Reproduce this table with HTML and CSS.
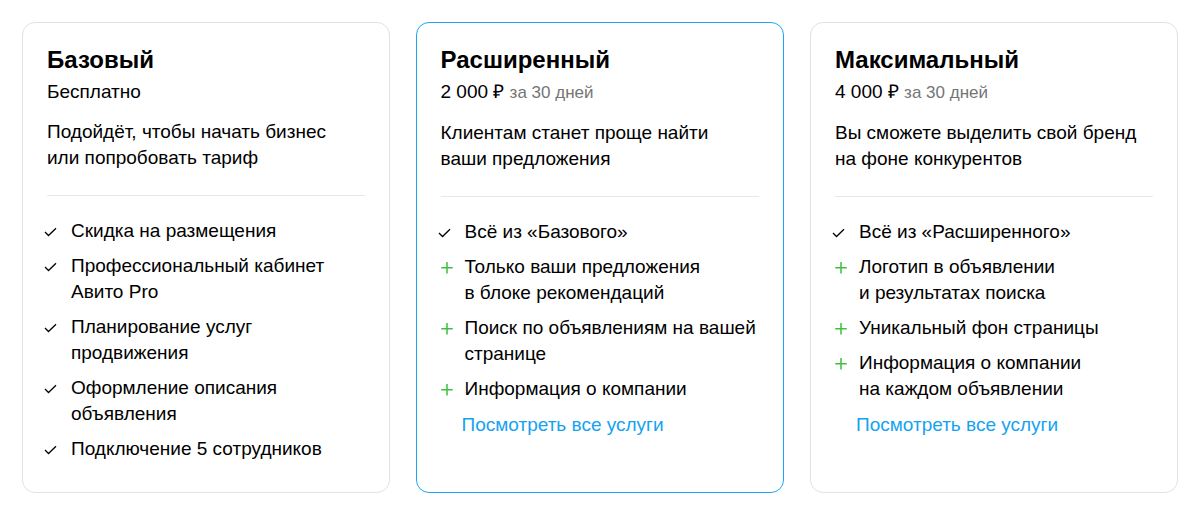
FILE: index.html
```html
<!DOCTYPE html>
<html lang="ru">
<head>
<meta charset="utf-8">
<link rel="stylesheet" href="styles.css">
</head>
<body>
<div class="plans">
  <div class="card">
    <h2 class="title">Базовый</h2>
    <div class="price">Бесплатно</div>
    <p class="desc">Подойдёт, чтобы начать бизнес<br>или попробовать тариф</p>
    <hr class="divider">
    <ul class="features">
      <li><svg class="ic" viewBox="0 0 16 16"><path d="M2 8 L5.5 11.5 L13 4.2" fill="none" stroke="#000" stroke-width="1.3"/></svg><span>Скидка на размещения</span></li>
      <li><svg class="ic" viewBox="0 0 16 16"><path d="M2 8 L5.5 11.5 L13 4.2" fill="none" stroke="#000" stroke-width="1.3"/></svg><span>Профессиональный кабинет<br>Авито Pro</span></li>
      <li><svg class="ic" viewBox="0 0 16 16"><path d="M2 8 L5.5 11.5 L13 4.2" fill="none" stroke="#000" stroke-width="1.3"/></svg><span>Планирование услуг<br>продвижения</span></li>
      <li><svg class="ic" viewBox="0 0 16 16"><path d="M2 8 L5.5 11.5 L13 4.2" fill="none" stroke="#000" stroke-width="1.3"/></svg><span>Оформление описания<br>объявления</span></li>
      <li><svg class="ic" viewBox="0 0 16 16"><path d="M2 8 L5.5 11.5 L13 4.2" fill="none" stroke="#000" stroke-width="1.3"/></svg><span>Подключение 5 сотрудников</span></li>
    </ul>
  </div>
  <div class="card card-active">
    <h2 class="title">Расширенный</h2>
    <div class="price">2 000 ₽ <span class="period">за 30 дней</span></div>
    <p class="desc">Клиентам станет проще найти<br>ваши предложения</p>
    <hr class="divider">
    <ul class="features">
      <li><svg class="ic" viewBox="0 0 16 16"><path d="M2 8 L5.5 11.5 L13 4.2" fill="none" stroke="#000" stroke-width="1.3"/></svg><span>Всё из «Базового»</span></li>
      <li><svg class="ic" viewBox="0 0 16 16"><path d="M10 2 V13.5 M4.25 7.75 H15.75" fill="none" stroke="#3fbf3f" stroke-width="1.5"/></svg><span>Только ваши предложения<br>в блоке рекомендаций</span></li>
      <li><svg class="ic" viewBox="0 0 16 16"><path d="M10 2 V13.5 M4.25 7.75 H15.75" fill="none" stroke="#3fbf3f" stroke-width="1.5"/></svg><span>Поиск по объявлениям на вашей<br>странице</span></li>
      <li><svg class="ic" viewBox="0 0 16 16"><path d="M10 2 V13.5 M4.25 7.75 H15.75" fill="none" stroke="#3fbf3f" stroke-width="1.5"/></svg><span>Информация о компании</span></li>
    </ul>
    <a class="more" href="#">Посмотреть все услуги</a>
  </div>
  <div class="card">
    <h2 class="title">Максимальный</h2>
    <div class="price">4 000 ₽ <span class="period">за 30 дней</span></div>
    <p class="desc">Вы сможете выделить свой бренд<br>на фоне конкурентов</p>
    <hr class="divider">
    <ul class="features">
      <li><svg class="ic" viewBox="0 0 16 16"><path d="M2 8 L5.5 11.5 L13 4.2" fill="none" stroke="#000" stroke-width="1.3"/></svg><span>Всё из «Расширенного»</span></li>
      <li><svg class="ic" viewBox="0 0 16 16"><path d="M10 2 V13.5 M4.25 7.75 H15.75" fill="none" stroke="#3fbf3f" stroke-width="1.5"/></svg><span>Логотип в объявлении<br>и результатах поиска</span></li>
      <li><svg class="ic" viewBox="0 0 16 16"><path d="M10 2 V13.5 M4.25 7.75 H15.75" fill="none" stroke="#3fbf3f" stroke-width="1.5"/></svg><span>Уникальный фон страницы</span></li>
      <li><svg class="ic" viewBox="0 0 16 16"><path d="M10 2 V13.5 M4.25 7.75 H15.75" fill="none" stroke="#3fbf3f" stroke-width="1.5"/></svg><span>Информация о компании<br>на каждом объявлении</span></li>
    </ul>
    <a class="more" href="#">Посмотреть все услуги</a>
  </div>
</div>
</body>
</html>
```
FILE: styles.css
```css
* { box-sizing: border-box; }
html, body { margin: 0; padding: 0; background: #fff; }
body {
  font-family: "Liberation Sans", Arial, sans-serif;
  color: #000;
  width: 1200px;
  height: 515px;
}
.plans {
  display: flex;
  gap: 26px;
  padding: 22px 22px 0;
}
.card {
  flex: 0 0 368px;
  height: 471px;
  border: 1px solid #e2e2e2;
  border-radius: 13px;
  padding: 23px 24px 0 24px;
  display: flex;
  flex-direction: column;
}
.card-active {
  border: 1.5px solid #1aa6f5;
  padding: 22.5px 23.5px 0 23.5px;
}
.title {
  margin: 0;
  font-size: 24px;
  font-weight: 700;
  line-height: 28px;
}
.price {
  margin-top: 6px;
  font-size: 19px;
  line-height: 24px;
}
.period {
  font-size: 17px;
  color: #757575;
}
.desc {
  margin: 15px 0 0;
  font-size: 19px;
  line-height: 26px;
}
.divider {
  margin: 24px 0 0;
  border: 0;
  height: 1px;
  background: #e8e8e8;
  width: 318px;
}
.features {
  list-style: none;
  margin: 22px 0 0;
  padding: 0;
  display: flex;
  flex-direction: column;
  gap: 9px;
}
.features li {
  display: flex;
  align-items: flex-start;
  font-size: 19px;
  line-height: 26px;
}
.ic {
  flex: 0 0 16px;
  width: 16px;
  height: 16px;
  margin: 6px 12px 0 -4px;
}
.more {
  margin: 10px 0 0 21px;
  font-size: 19px;
  line-height: 26px;
  color: #14a3f0;
  text-decoration: none;
  align-self: flex-start;
}
```
